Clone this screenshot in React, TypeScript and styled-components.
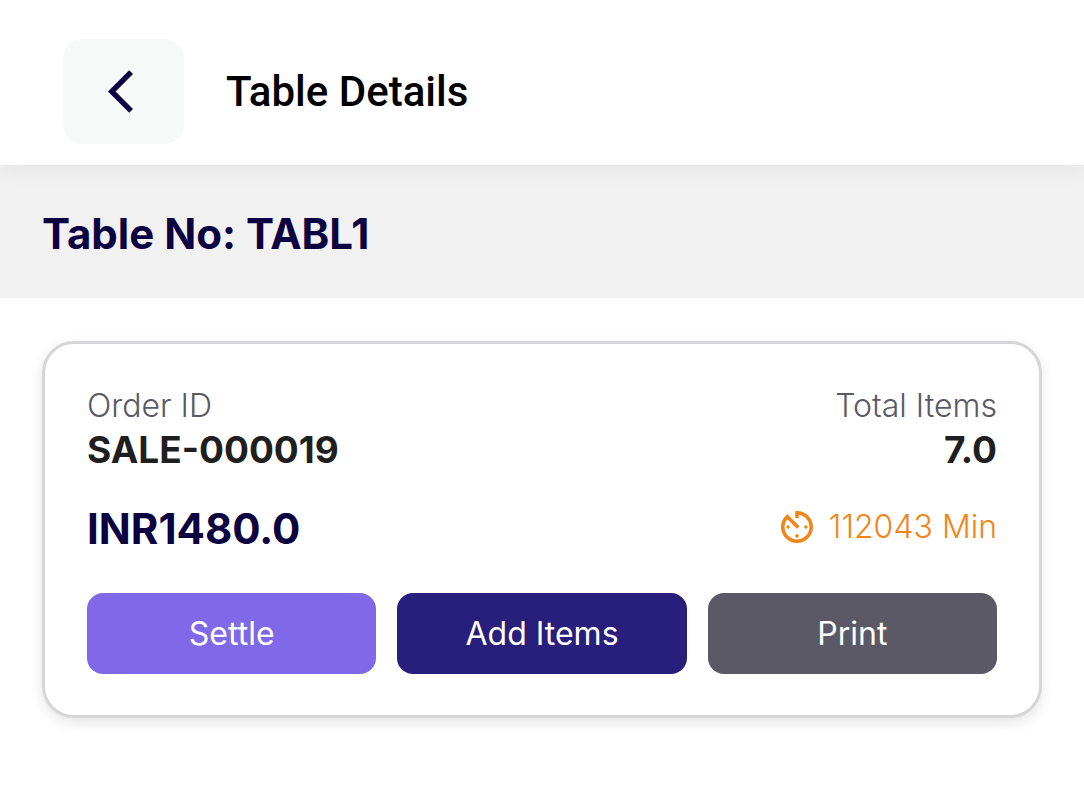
import React from "react";
import styled, { createGlobalStyle } from "styled-components";

const GlobalStyle = createGlobalStyle`
  *, *::before, *::after { box-sizing: border-box; }
  body { margin: 0; background: #ffffff; font-family: Inter, sans-serif; color: #1f1f1f; }
  h1, h2, p, dl, dt, dd { margin: 0; }
`;

const Header = styled.header`
  position: relative;
  display: flex;
  align-items: center;
  gap: 42px;
  padding: 39px 63px 21px;
  background: #ffffff;
  box-shadow: 0 4px 22px rgba(0, 0, 0, 0.06);
`;

const BackButton = styled.button`
  display: grid;
  place-items: center;
  width: 121px;
  height: 105px;
  padding: 0 6px 0 0;
  border: 0;
  border-radius: 20px;
  background: #f7f9f9;
  color: #0c0040;
  cursor: pointer;
`;

const Title = styled.h1`
  font: 500 42px/52px Roboto, sans-serif;
  color: #000000;
`;

const TableBar = styled.section`
  padding: 44px 42px 40px;
  background: #f1f1f1;
`;

const TableName = styled.h2`
  font-size: 42px;
  line-height: 49px;
  font-weight: 700;
  color: #0c0040;
`;

const Main = styled.main`
  padding: 43px 42px;
`;

const Card = styled.article`
  display: flex;
  flex-direction: column;
  padding: 40px 42px 41px;
  border: 3px solid #d6d6d8;
  border-radius: 32px;
  background: #ffffff;
  box-shadow: 0 5px 14px rgba(0, 0, 0, 0.1);
`;

const Row = styled.div`
  display: flex;
  justify-content: space-between;
  align-items: center;
`;

const Field = styled.dl<{ $end?: boolean }>`
  text-align: ${(p) => (p.$end ? "right" : "left")};
`;

const Label = styled.dt`
  font-size: 32px;
  line-height: 44px;
  font-weight: 350;
  color: #5a5966;
`;

const Value = styled.dd`
  font-size: 37px;
  line-height: 43px;
  font-weight: 700;
`;

const Summary = styled(Row)`
  align-items: flex-start;
  padding: 33px 0 39px;
`;

const Amount = styled.p`
  font-size: 42px;
  line-height: 50px;
  font-weight: 700;
  color: #0c0040;
`;

const Elapsed = styled.p`
  display: flex;
  align-items: center;
  gap: 16px;
  font-size: 32px;
  line-height: 46px;
  font-weight: 350;
  color: #f28519;
`;

const Actions = styled.div`
  display: grid;
  grid-template-columns: repeat(3, 1fr);
  gap: 21px;
`;

const ActionButton = styled.button<{ $color: string }>`
  height: 81px;
  padding: 0;
  border: 0;
  border-radius: 16px;
  background: ${(p) => p.$color};
  color: #ffffff;
  font: 400 32px/40px Inter, sans-serif;
  cursor: pointer;
`;

const BackIcon = () => (
  <svg width="25" height="43" viewBox="0 2.1 11.67 19.8" fill="currentColor" aria-hidden="true">
    <path d="M11.67 3.87L9.9 2.1 0 12l9.900 9.900 1.770-1.770L3.540 12z" />
  </svg>
);

const TimerIcon = () => (
  <svg width="32" height="32" viewBox="3 3 18 18" fill="currentColor" aria-hidden="true">
    <circle cx="17" cy="12" r="1" />
    <circle cx="12" cy="17" r="1" />
    <circle cx="7" cy="12" r="1" />
    <path d="M11 3v4h2V5.080c3.390.490 6 3.390 6 6.920 0 3.870-3.130 7-7 7s-7-3.130-7-7c0-1.680.590-3.220 1.580-4.420L12 13l1.410-1.410-6.800-6.800v.020C4.420 6.450 3 9.050 3 12c0 4.970 4.020 9 9 9 4.970 0 9-4.030 9-9s-4.030-9-9-9h-1z" />
  </svg>
);

export default function App() {
  return (
    <>
      <GlobalStyle />
      <Header>
        <BackButton type="button" aria-label="Back"><BackIcon /></BackButton>
        <Title>Table Details</Title>
      </Header>
      <TableBar>
        <TableName>Table No: TABL1</TableName>
      </TableBar>
      <Main>
        <Card>
          <Row>
            <Field><Label>Order ID</Label><Value>SALE-000019</Value></Field>
            <Field $end><Label>Total Items</Label><Value>7.0</Value></Field>
          </Row>
          <Summary>
            <Amount>INR1480.0</Amount>
            <Elapsed><TimerIcon />112043 Min</Elapsed>
          </Summary>
          <Actions>
            <ActionButton type="button" $color="#8069e8">Settle</ActionButton>
            <ActionButton type="button" $color="#281e7b">Add Items</ActionButton>
            <ActionButton type="button" $color="#5a5965">Print</ActionButton>
          </Actions>
        </Card>
      </Main>
    </>
  );
}
